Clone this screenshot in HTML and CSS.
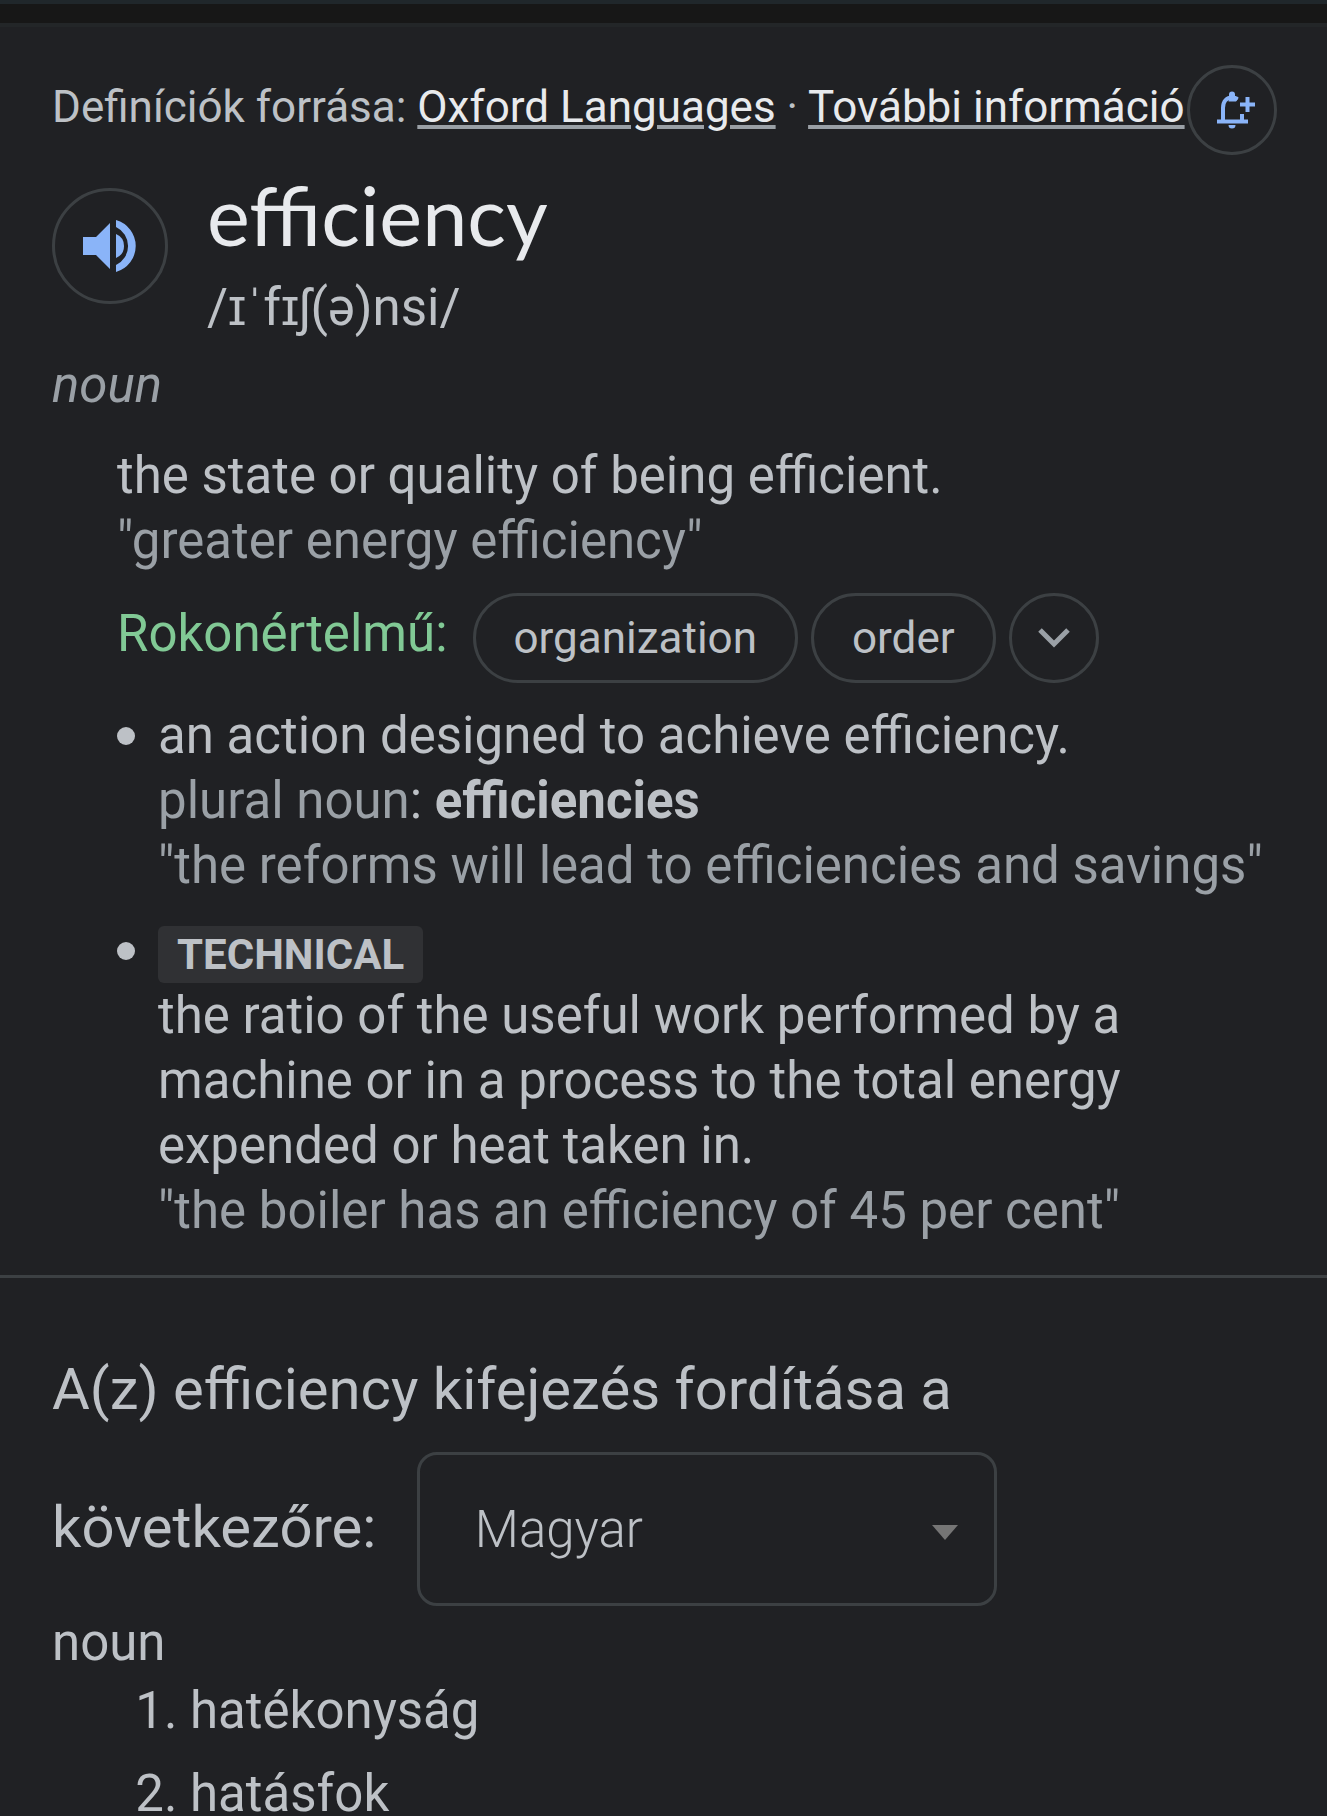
FILE: index.html
```html
<!DOCTYPE html>
<html lang="hu">
<head>
<meta charset="utf-8">
<meta name="viewport" content="width=device-width, initial-scale=1">
<title>efficiency</title>
<link rel="stylesheet" href="styles.css">
</head>
<body>
<div class="strip"></div>
<main>
  <section class="dictionary">
    <header class="source">
      <p class="source-text">Definíciók forrása: <a href="#oxford">Oxford Languages</a> · <a href="#info">További információ</a></p>
      <button class="round round-small" type="button" aria-label="Értesítés hozzáadása">
        <svg width="48" height="40" viewBox="-8 0 48 40" fill="none" stroke="#8ab4f8" stroke-width="4" aria-hidden="true">
          <path d="M1 31.500H32M7 31V18C7 11 11 7.500 16 7.500C18.500 7.500 20 8 21.500 9M26 24V31M31.500 7V22M24 14.500H39"/>
          <path d="M13 6.500V4.500A3 3 0 0 1 19 4.500V6.500L22.500 8.500L20 11.500H12.500ZM12.500 35H19.500A3.500 3.500 0 0 1 12.500 35Z" fill="#8ab4f8" stroke="none"/>
        </svg>
      </button>
    </header>

    <div class="entry">
      <button class="round round-large" type="button" aria-label="Kiejtés meghallgatása">
        <svg width="54" height="54" viewBox="0 0 54 54" fill="#8ab4f8" aria-hidden="true">
          <path d="M0 18H13L27 4V50L13 36H0Z"/>
          <path d="M33 15A13 13 0 0 1 33 39Z"/>
          <path d="M33 1A27 27 0 0 1 33 53V46A21 21 0 0 0 33 8Z"/>
        </svg>
      </button>
      <div>
        <h1>efficiency</h1>
        <p class="phonetic" lang="en">/ɪˈfɪʃ(ə)nsi/</p>
      </div>
    </div>

    <p class="word-class">noun</p>

    <div class="senses" lang="en">
      <p>the state or quality of being efficient.</p>
      <p class="muted">"greater energy efficiency"</p>
      <div class="synonyms">
        <span class="synonyms-label" lang="hu">Rokonértelmű:</span>
        <div class="chips">
          <button class="chip" type="button">organization</button>
          <button class="chip" type="button">order</button>
          <button class="round round-small" type="button" aria-label="Továbbiak">
            <svg width="32" height="20" viewBox="0 0 32 20" fill="none" stroke="#9aa0a6" stroke-width="5" aria-hidden="true"><path d="M2 2L16 16L30 2"/></svg>
          </button>
        </div>
      </div>
      <ul class="subsenses">
        <li>
          <p>an action designed to achieve efficiency.</p>
          <p><span class="muted">plural noun</span>: <b>efficiencies</b></p>
          <p class="muted">"the reforms will lead to efficiencies and savings"</p>
        </li>
        <li>
          <span class="badge">TECHNICAL</span>
          <p>the ratio of the useful work performed by a machine or in a process to the total energy expended or heat taken in.</p>
          <p class="muted">"the boiler has an efficiency of 45 per cent"</p>
        </li>
      </ul>
    </div>
  </section>

  <section class="translation">
    <div class="translate-title">
      <label for="language">A(z) efficiency kifejezés fordítása a következőre:</label>
      <select id="language"><option>Magyar</option></select>
    </div>
    <p>noun</p>
    <ol>
      <li>hatékonyság</li>
      <li>hatásfok</li>
    </ol>
  </section>
</main>
</body>
</html>
```
FILE: styles.css
```css
* {
  box-sizing: border-box;
}

body {
  margin: 0;
  background: #202124;
  color: #bdc1c6;
  font: 51px/65px Roboto, sans-serif;
}

p, h1, ul, ol {
  margin: 0;
  padding: 0;
}

button, select {
  font-family: inherit;
  color: inherit;
  background: transparent;
  border: 3px solid #3c4043;
}

.strip {
  height: 27px;
  background: #171717;
  border-top: 4px solid #20272b;
  border-bottom: 4px solid #232628;
}

.dictionary {
  padding: 38px 50px 32px 52px;
  border-bottom: 3px solid #3c4043;
}

.source {
  display: flex;
  justify-content: space-between;
  align-items: flex-start;
}

.source-text {
  padding-top: 12px;
  font-size: 44px;
  line-height: 60px;
}

.source-text a {
  color: #e8eaed;
  text-decoration: underline;
  text-decoration-color: #9aa0a6;
  text-decoration-thickness: 4px;
  text-underline-offset: 3px;
}

.round {
  display: flex;
  flex: none;
  align-items: center;
  justify-content: center;
  padding: 0;
  border-radius: 50%;
}

.round-small {
  width: 90px;
  height: 90px;
}

.round-large {
  width: 116px;
  height: 116px;
  margin-top: 8px;
}

.entry {
  display: flex;
  align-items: flex-start;
  gap: 39px;
  padding-top: 25px;
}

h1 {
  margin-bottom: 26px;
  color: #e8eaed;
  font: 400 81px/69px Lato, sans-serif;
}

.word-class {
  padding-top: 12px;
  color: #9aa0a6;
  font-style: italic;
}

.senses {
  padding: 26px 0 0 65px;
}

.muted {
  color: #9aa0a6;
}

.synonyms {
  display: flex;
  align-items: flex-start;
  gap: 25px;
  padding: 20px 0;
}

.synonyms-label {
  padding-top: 8px;
  color: #81c995;
}

.chips {
  display: flex;
  flex-wrap: wrap;
  gap: 13px;
}

.chip {
  height: 90px;
  padding: 0 38px;
  border-radius: 45px;
  font-size: 44px;
}

.subsenses {
  display: grid;
  gap: 20px;
  list-style: none;
}

.subsenses li {
  position: relative;
  padding-left: 41px;
}

.subsenses li::before {
  content: "";
  position: absolute;
  left: 0;
  top: 24px;
  width: 18px;
  height: 18px;
  border-radius: 50%;
  background: #bdc1c6;
}

.badge {
  display: block;
  width: fit-content;
  margin-top: 8px;
  padding: 0 19px;
  border-radius: 6px;
  background: #303134;
  font-size: 42px;
  font-weight: 700;
  line-height: 57px;
}

.translation {
  padding: 75px 52px 0;
}

.translate-title {
  padding-bottom: 4px;
  font-size: 58px;
  line-height: 72px;
}

select {
  appearance: none;
  width: 580px;
  max-width: 100%;
  height: 154px;
  margin: 27px 0 0 26px;
  padding: 0 55px;
  border-radius: 20px;
  font-size: 51px;
  font-weight: 300;
  background: url("data:image/svg+xml,%3Csvg xmlns='http://www.w3.org/2000/svg' width='26' height='16'%3E%3Cpath d='M0 0H26L13 15Z' fill='%23757575'/%3E%3C/svg%3E") no-repeat right 36px top 70px;
}

ol {
  display: grid;
  gap: 18px;
  padding: 3px 0 0 138px;
}
```
